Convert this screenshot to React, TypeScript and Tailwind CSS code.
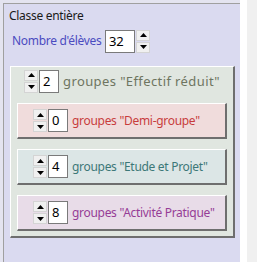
const FONT = "font-['Noto_Sans',sans-serif]";

function Spinner() {
  return (
    <div className="flex flex-col gap-px shrink-0">
      <div className="w-[14px] h-[11px] bg-[#f0f0f0] border border-[#d4d4d4] flex items-center justify-center">
        <svg width="7" height="4" viewBox="0 0 7 4">
          <polygon points="0,4 7,4 3.5,0" fill="#000" />
        </svg>
      </div>
      <div className="w-[14px] h-[11px] bg-[#f0f0f0] border border-[#d4d4d4] flex items-center justify-center">
        <svg width="7" height="4" viewBox="0 0 7 4">
          <polygon points="0,0 7,0 3.5,4" fill="#000" />
        </svg>
      </div>
    </div>
  );
}

function NumBox({ value, width }: { value: number; width: string }) {
  return (
    <div
      className={`${width} h-[23px] shrink-0 bg-white border border-[#7a7a7a] flex items-center pl-[3px] text-[13px] text-black`}
    >
      {value}
    </div>
  );
}

interface GroupRow {
  value: number;
  label: string;
  bg: string;
  color: string;
}

const SUB_GROUPS: GroupRow[] = [
  { value: 0, label: 'groupes "Demi-groupe"', bg: "bg-[#f0dcdc]", color: "text-[#c83c3c]" },
  { value: 4, label: 'groupes "Etude et Projet"', bg: "bg-[#dce6e6]", color: "text-[#3c7878]" },
  { value: 8, label: 'groupes "Activité Pratique"', bg: "bg-[#e8dce8]", color: "text-[#963c96]" },
];

export default function App() {
  return (
    <div className={`w-[257px] h-[262px] flex bg-[#f0f0f0] ${FONT} text-[12px] leading-none tracking-[-0.3px] whitespace-nowrap`}>
      {/* lavender group box */}
      <div className="w-[240px] h-full bg-[#e4e4f0] pl-[3px] pt-[3px]">
        <div className="h-full border-l border-t border-[#a0a0a0] bg-[#dadaf0] flex flex-col">
          <div className="pl-[5px] pt-[6px] h-[24px] text-[#1a1a1a]">Classe entière</div>

          {/* Nombre d'élèves */}
          <div className="flex items-center pl-[8px] pt-[1px] h-[25px]">
            <span className="text-[#4b4bc0] w-[93px] shrink-0">Nombre d'élèves</span>
            <NumBox value={32} width="w-[30px]" />
            <div className="ml-[1px]">
              <Spinner />
            </div>
          </div>

          {/* Effectif réduit panel */}
          <div className="mt-[13px] ml-[6px] w-[225px] h-[172px] bg-[#e0e6e0] border-t border-l border-white border-r-2 border-b-2 border-r-[#6e6e6e] border-b-[#6e6e6e] flex flex-col">
            <div className="flex items-center pl-[13px] pt-[2px] h-[26px]">
              <Spinner />
              <div className="ml-[1px]">
                <NumBox value={2} width="w-[20px]" />
              </div>
              <span className="ml-[4px] text-[13px] tracking-[0.4px] text-[#6e7560]">groupes "Effectif réduit"</span>
            </div>

            <div className="flex flex-col gap-[10px] pl-[6px] mt-[10px]">
              {SUB_GROUPS.map((g) => (
                <div
                  key={g.label}
                  className={`w-[210px] h-[36px] ${g.bg} border-t border-l border-white border-r-2 border-b-2 border-r-[#6e6e6e] border-b-[#6e6e6e] flex items-center pl-[15px]`}
                >
                  <Spinner />
                  <div className="ml-[1px]">
                    <NumBox value={g.value} width="w-[20px]" />
                  </div>
                  <span className={`ml-[4px] ${g.color}`}>{g.label}</span>
                </div>
              ))}
            </div>
          </div>
        </div>
      </div>
      <div className="w-[7px] h-full bg-white" />
      <div className="flex-1 h-full bg-[#f0f0f0]" />
    </div>
  );
}
